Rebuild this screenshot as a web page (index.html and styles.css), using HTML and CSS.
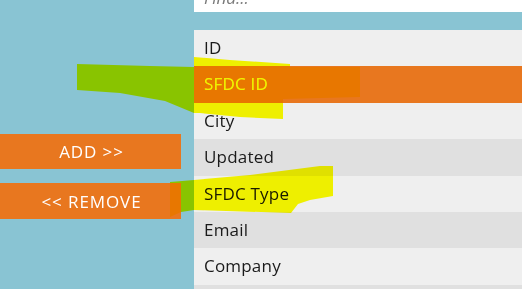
FILE: index.html
```html
<!DOCTYPE html>
<html>
<head>
  <meta charset="UTF-8">
  <title>Field Picker</title>
  <link rel="stylesheet" href="styles.css">
</head>
<body>
  <div class="picker">
    <div class="actions">
      <button class="btn">ADD &gt;&gt;</button>
      <button class="btn btn-remove">&lt;&lt; REMOVE</button>
    </div>
    <div class="fields">
      <input type="text" class="find" placeholder="Find...">
      <ul class="field-list">
        <li>ID</li>
        <li class="selected">SFDC ID</li>
        <li>City</li>
        <li>Updated</li>
        <li>SFDC Type</li>
        <li>Email</li>
        <li>Company</li>
        <li></li>
      </ul>
    </div>
  </div>
  <!-- highlighter marks drawn over the screen -->
  <svg class="marks" width="522" height="289" viewBox="0 0 522 289">
    <polygon points="77,64 150,66 194,67 194,57 230,60 290,64 290,67 360,67 360,97 283,99 283,119 240,117 200,113 194,113 165,101 120,93 77,90"/>
    <polygon points="170,182 194,180 250,175 320,166 333,166 333,196 310,200 298,204 291,213 194,210 181,212 170,217"/>
  </svg>
</body>
</html>
```
FILE: styles.css
```css
body {
  margin: 0;
  height: 289px;
  overflow: hidden;
  background-color: #89C4D3;
  font-family: 'Open Sans', 'Noto Sans', sans-serif;
  position: relative;
}

.picker {
  display: flex;
}

.actions {
  width: 194px;
  padding-top: 134px;
  display: flex;
  flex-direction: column;
  gap: 14px;
}

.btn {
  width: 181px;
  height: 35px;
  border: none;
  padding: 0 0 0 2px;
  background-color: #E8771F;
  color: #FFFFFF;
  font-family: inherit;
  font-size: 17px;
  letter-spacing: 0.9px;
  cursor: pointer;
}

.btn-remove {
  height: 36px;
}

.fields {
  flex: 1;
}

.find {
  display: block;
  width: 100%;
  height: 30px;
  margin-top: -18px;
  margin-bottom: 18px;
  border: none;
  padding: 0 10px;
  box-sizing: border-box;
  background-color: #FFFFFF;
  font-family: inherit;
  font-size: 17px;
  font-style: italic;
}

.find::placeholder {
  color: #7A7A7A;
}

.field-list {
  list-style: none;
  margin: 0;
  padding: 0;
}

.field-list li {
  height: 36.4px;
  line-height: 36px;
  padding-left: 10px;
  font-size: 17px;
  letter-spacing: 0.2px;
  color: #1A1A1A;
  background-color: #EFEFEF;
}

.field-list li:nth-child(even) {
  background-color: #E0E0E0;
}

.field-list li.selected {
  background-color: #E8771F;
  color: #FFFFFF;
}

.marks {
  position: absolute;
  top: 0;
  left: 0;
  pointer-events: none;
  mix-blend-mode: darken;
  fill: #EEF000;
}
```
